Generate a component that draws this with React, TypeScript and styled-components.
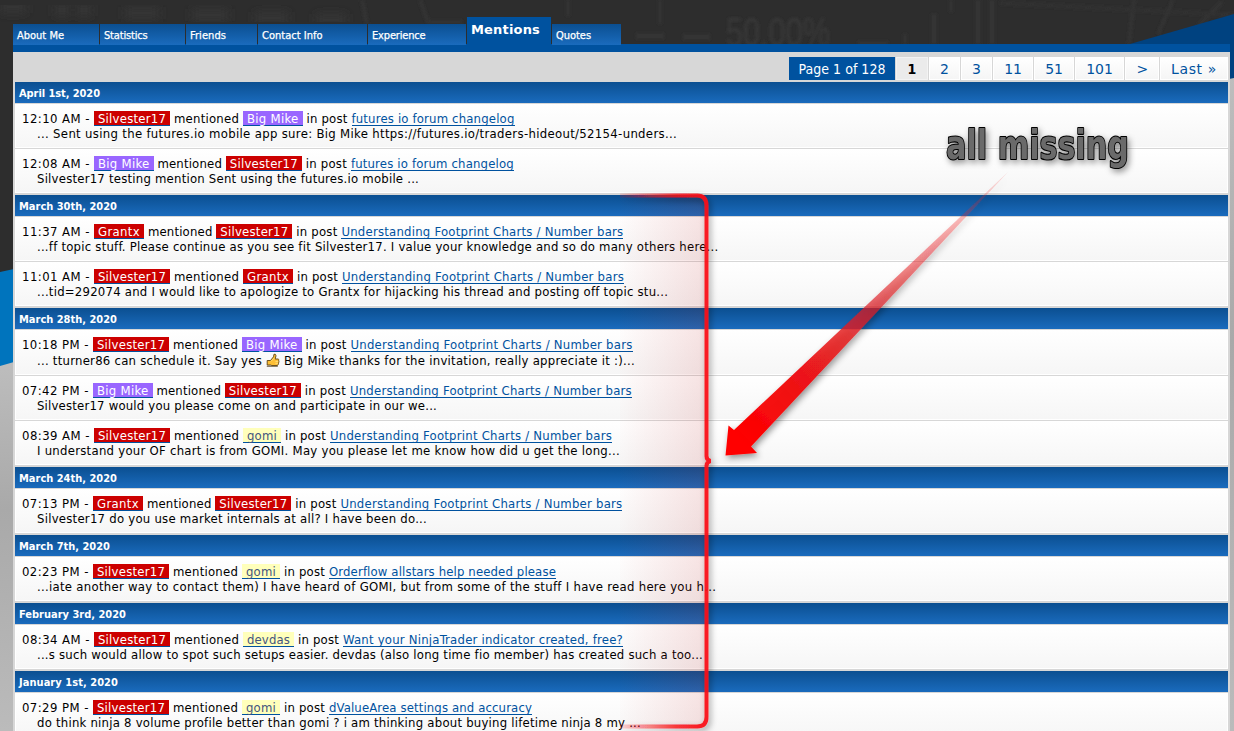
import React, { useLayoutEffect, useRef, useState } from 'react';
import styled, { createGlobalStyle, css } from 'styled-components';

const sans = "'DejaVu Sans Condensed', 'DejaVu Sans', Tahoma, Verdana, sans-serif";

const GlobalStyle = createGlobalStyle`
  html, body { margin: 0; padding: 0; height: 731px; overflow: hidden; }
  body { background: #2d2d2d; color: #000; font: 13px/15px ${sans}; font-stretch: condensed; }
  * { box-sizing: border-box; }
`;

const Page = styled.div`
  position: relative;
  width: 1234px;
  height: 731px;
  overflow: hidden;
`;

const Layer = styled.svg`
  position: absolute;
  top: 0;
  left: 0;
  pointer-events: none;
`;

const Content = styled.main`
  position: relative;
  width: 1217px;
  margin-left: 13px;
  padding-top: 17px;
`;

const Tabs = styled.nav`
  position: relative;
  display: flex;
  align-items: flex-end;
  gap: 1px;
  height: 28px;
  margin-bottom: -1px;
`;

const Tab = styled.a<{ $width: number; $active?: boolean }>`
  width: ${p => p.$width}px;
  height: 21px;
  padding: 4px 0 0 4px;
  color: #fff;
  font-size: 11px;
  line-height: 15px;
  -webkit-text-stroke: 0.25px #fff;
  background: linear-gradient(#0b4f91, #1a6bbd);
  ${p => p.$active && css`
    height: 28px;
    padding-top: 5px;
    font-family: 'DejaVu Sans', Verdana, sans-serif;
    font-stretch: normal;
    font-size: 13px;
    font-weight: bold;
    -webkit-text-stroke: 0;
    background: #00529f;
  `}
`;

const Panel = styled.div`
  background: #d7d7d7;
  border-top: 8px solid #00529f;
  padding: 0 2px;
  height: 690px;
`;

const Pager = styled.div`
  display: flex;
  justify-content: flex-end;
  gap: 1px;
  height: 30px;
  padding: 5px 0 2px;
`;

const PageCell = styled.a<{ $width: number; $kind?: 'label' | 'current' }>`
  width: ${p => p.$width}px;
  height: 23px;
  display: flex;
  align-items: center;
  justify-content: center;
  padding-top: 2px;
  font-size: 14px;
  color: #00529f;
  border: 1px solid #fff;
  background: linear-gradient(#fff, #f5f5f5);
  ${p => !p.$kind && css`
    font-family: 'DejaVu Sans', Verdana, sans-serif;
    font-stretch: normal;
  `}
  ${p => p.$kind === 'label' && css`
    color: #fff;
    border-color: #00529f;
    background: #00529f;
  `}
  ${p => p.$kind === 'current' && css`
    color: #000;
    font-weight: bold;
    border-color: #f3f3f3;
    background: #ebebeb;
  `}
`;

const Day = styled.section`
  display: flex;
  flex-direction: column;
  gap: 1px;
  margin-bottom: 2px;
`;

const DayTitle = styled.h3`
  margin: 0;
  height: 21px;
  padding-left: 4px;
  font-size: 11px;
  line-height: 23px;
  font-weight: bold;
  color: #fff;
  background: linear-gradient(#0b4f91, #1a6bbd);
`;

const Row = styled.article<{ $tall?: boolean }>`
  height: ${p => (p.$tall ? 45 : 44)}px;
  padding: 7px 0 0 6px;
  border: solid #fff;
  border-width: 0 1px 1px;
  background: linear-gradient(#fff, #f6f6f6);
`;

const Line = styled.div`
  display: flex;
  height: 15px;
  white-space: pre;
`;

const Snippet = styled(Line)<{ $tall?: boolean }>`
  padding-left: 15px;
  ${p => p.$tall && 'margin-top: 1px;'}
`;

const palette = {
  red: css`background: #cc0000; color: #fff;`,
  violet: css`background: #9966ff; color: #fff;`,
  yellow: css`background: #ffffbb; color: #44557e;`,
};

const Badge = styled.a<{ $tone: keyof typeof palette }>`
  height: 15px;
  line-height: 15px;
  border-bottom: 1px solid #00529f;
  ${p => palette[p.$tone]}
`;

const PostLink = styled.a`
  height: 15px;
  color: #00529f;
  border-bottom: 1px solid #00529f;
`;

const Measured = styled.span`
  display: inline-block;
  white-space: pre;
  vertical-align: top;
`;

/* Spreads a run of text evenly over the given width. */
function Run({ w, children }: { w: number; children: string }) {
  const ref = useRef<HTMLSpanElement>(null);
  const [spacing, setSpacing] = useState(0);
  useLayoutEffect(() => {
    const natural = ref.current!.getBoundingClientRect().width;
    setSpacing(s => s + (w - natural) / children.length);
  }, [w, children]);
  return <Measured ref={ref} style={{ letterSpacing: `${spacing}px` }}>{children}</Measured>;
}

const users = {
  'Silvester17': { tone: 'red', width: 76 },
  'Grantx': { tone: 'red', width: 50 },
  'Big Mike': { tone: 'violet', width: 59.5 },
  'gomi': { tone: 'yellow', width: 38 },
  'devdas': { tone: 'yellow', width: 51 },
} as const;
type User = keyof typeof users;

function UserBadge({ name }: { name: User }) {
  const u = users[name];
  return <Badge $tone={u.tone}><Run w={u.width}>{` ${name} `}</Run></Badge>;
}

type Mention = { time: string; by: User; who: User; post: string; postW: number; text: string; textW: number; thumb?: boolean };

const FOOTPRINT = 'Understanding Footprint Charts / Number bars';

const days: { date: string; w: number; items: Mention[] }[] = [
  { date: 'April 1st, 2020', w: 81, items: [
    { time: '12:10 AM', by: 'Silvester17', who: 'Big Mike', post: 'futures io forum changelog', postW: 163, text: '... Sent using the futures.io mobile app sure: Big Mike https://futures.io/traders-hideout/52154-unders...', textW: 640 },
    { time: '12:08 AM', by: 'Big Mike', who: 'Silvester17', post: 'futures io forum changelog', postW: 163, text: 'Silvester17 testing mention Sent using the futures.io mobile ...', textW: 382 },
  ] },
  { date: 'March 30th, 2020', w: 98, items: [
    { time: '11:37 AM', by: 'Grantx', who: 'Silvester17', post: FOOTPRINT, postW: 282, text: '...ff topic stuff. Please continue as you see fit Silvester17. I value your knowledge and so do many others here...', textW: 682 },
    { time: '11:01 AM', by: 'Silvester17', who: 'Grantx', post: FOOTPRINT, postW: 282, text: '...tid=292074 and I would like to apologize to Grantx for hijacking his thread and posting off topic stu...', textW: 631 },
  ] },
  { date: 'March 28th, 2020', w: 98, items: [
    { time: '10:18 PM', by: 'Silvester17', who: 'Big Mike', post: FOOTPRINT, postW: 282, text: '... tturner86 can schedule it. Say yes ', textW: 229, thumb: true },
    { time: '07:42 PM', by: 'Big Mike', who: 'Silvester17', post: FOOTPRINT, postW: 282, text: 'Silvester17 would you please come on and participate in our we...', textW: 400 },
    { time: '08:39 AM', by: 'Silvester17', who: 'gomi', post: FOOTPRINT, postW: 282, text: 'I understand your OF chart is from GOMI. May you please let me know how did u get the long...', textW: 583 },
  ] },
  { date: 'March 24th, 2020', w: 98, items: [
    { time: '07:13 PM', by: 'Grantx', who: 'Silvester17', post: FOOTPRINT, postW: 282, text: 'Silvester17 do you use market internals at all? I have been do...', textW: 390 },
  ] },
  { date: 'March 7th, 2020', w: 91, items: [
    { time: '02:23 PM', by: 'Silvester17', who: 'gomi', post: 'Orderflow allstars help needed please', postW: 227, text: '...iate another way to contact them) I have heard of GOMI, but from some of the stuff I have read here you h...', textW: 679 },
  ] },
  { date: 'February 3rd, 2020', w: 107, items: [
    { time: '08:34 AM', by: 'Silvester17', who: 'devdas', post: 'Want your NinjaTrader indicator created, free?', postW: 280, text: '...s such would allow to spot such setups easier. devdas (also long time fio member) has created such a too...', textW: 666 },
  ] },
  { date: 'January 1st, 2020', w: 99, items: [
    { time: '07:29 PM', by: 'Silvester17', who: 'gomi', post: 'dValueArea settings and accuracy', postW: 203, text: 'do think ninja 8 volume profile better than gomi ? i am thinking about buying lifetime ninja 8 my ...', textW: 604 },
  ] },
];

const tabs = [
  { label: 'About Me', width: 86, text: 47 },
  { label: 'Statistics', width: 85, text: 43.5 },
  { label: 'Friends', width: 71, text: 36 },
  { label: 'Contact Info', width: 109, text: 60.5 },
  { label: 'Experience', width: 98, text: 53.5 },
  { label: 'Mentions', width: 84, text: 69, active: true },
  { label: 'Quotes', width: 69, text: 35 },
];

const pages: { label: string; width: number; text: number; kind?: 'label' | 'current' }[] = [
  { label: 'Page 1 of 128', width: 106, text: 87, kind: 'label' },
  { label: '1', width: 32, text: 9, kind: 'current' },
  { label: '2', width: 31, text: 9 },
  { label: '3', width: 31, text: 9 },
  { label: '11', width: 40, text: 17.5 },
  { label: '51', width: 40, text: 17.5 },
  { label: '101', width: 49, text: 26.5 },
  { label: '>', width: 34, text: 11 },
  { label: 'Last »', width: 68, text: 46 },
];

const Thumb = () => (
  <svg width="14" height="15" viewBox="0 0 14 15">
    <path d="M1.2 7.5h3.3L7.5 3.8 8 1.2q2-.4 2 1.6L9.2 6h3q1 .4.5 1.6.5.7 0 1.6.3.9-.4 1.6 0 1.2-.9 1.7H5.8L4.5 12H1.2z" fill="#fdbf35" stroke="#5e4312" strokeWidth=".9" />
    <path d="M.8 13.2h11" stroke="#5b4a2b" strokeWidth="1" />
    <path d="M5 8.3 8.3 5M9.5 8.4h2.7M9.4 10.3h2.5" stroke="#ffe58a" strokeWidth=".8" />
  </svg>
);

const Backdrop = () => (
  <Layer width="1234" height="731" aria-hidden>
    <defs>
      <linearGradient id="gray" x1="0" y1="0" x2="0" y2="1">
        <stop offset="0" stopColor="#bdbdbd" /><stop offset=".4" stopColor="#a9a9a9" /><stop offset="1" stopColor="#bbb" />
      </linearGradient>
      <filter id="haze"><feGaussianBlur stdDeviation="1.4" /></filter>
      <filter id="fog"><feGaussianBlur stdDeviation="4" /></filter>
    </defs>
    <rect width="1234" height="731" fill="#2d2d2d" />
    <g filter="url(#fog)" fill="none" stroke="#343434" strokeWidth="12">
      <path d="M0 7h26M55 10h14M77 10h14M125 13h34M192 15h36M255 18h33M316 20h30" />
    </g>
    <g filter="url(#haze)" fill="none" stroke="#353535" strokeWidth="3">
      <path d="M362 0l5 24M420 0l8 22h34M568 0v16M660 0v24M858 43h30M905 34v10M951 0v12M1134 0l-5 44M1173 0l-15 34M1222 2l-24 24" />
      <path d="M934 14v30M978 0v44M992 0v44M636 36h28M683 37h27" strokeWidth="5" />
      <path d="M1000 3l234 12" stroke="#313131" />
      <text x="726" y="46" fill="#383838" stroke="none" fontFamily="Liberation Sans" fontSize="40" textLength="104" lengthAdjust="spacingAndGlyphs">50.00%</text>
    </g>
    <path d="M0 272 14 269V370H0z" fill="#0074bd" />
    <path d="M0 366 14 362V731H0z" fill="url(#gray)" />
    <path d="M1130 44 1234 14V80H1130z" fill="#004280" />
    <path d="M1229 79 1234 78V731H1229z" fill="url(#gray)" />
  </Layer>
);

const Annotation = () => (
  <Layer width="1234" height="731">
    <defs>
      <linearGradient id="wash" gradientUnits="userSpaceOnUse" x1="620" x2="707" y1="0" y2="0">
        <stop offset="0" stopColor="#c02020" stopOpacity=".01" /><stop offset="1" stopColor="#c02020" stopOpacity=".13" />
      </linearGradient>
      <linearGradient id="edge" gradientUnits="userSpaceOnUse" x1="620" x2="700" y1="0" y2="0">
        <stop offset="0" stopColor="#fa0f14" stopOpacity=".12" /><stop offset=".7" stopColor="#fa0f14" stopOpacity=".8" /><stop offset="1" stopColor="#fa0f14" stopOpacity=".93" />
      </linearGradient>
      <linearGradient id="shaft" gradientUnits="userSpaceOnUse" x1="740" y1="440" x2="1008" y2="172">
        <stop offset="0" stopColor="#f00" /><stop offset=".25" stopColor="#ec1215" stopOpacity=".97" /><stop offset=".5" stopColor="#df1a22" stopOpacity=".68" /><stop offset=".8" stopColor="#f02020" stopOpacity=".32" /><stop offset="1" stopColor="#f02020" stopOpacity=".15" />
      </linearGradient>
      <filter id="shade" filterUnits="userSpaceOnUse" x="600" y="100" width="634" height="631"><feDropShadow dx="2" dy="3" stdDeviation="3.2" floodColor="#000" floodOpacity=".42" /></filter>
    </defs>
    <path d="M620 195h77q9 0 9 9v513q0 9-9 9h-77z" fill="url(#wash)" />
    <g filter="url(#shade)">
      <path d="M620 195.5H697Q706.5 195.5 706.5 205.5V456Q706.5 460 710.5 461Q706.5 462 706.5 466V717Q706.5 726.5 697 726.5H620" fill="none" stroke="url(#edge)" strokeWidth="4" />
      <path d="M725.5 455.5 728.5 425.5 734 430 1008 172 751 446.5 757 453z" fill="url(#shaft)" />
      <text x="946" y="159" fill="#6b6b6b" stroke="#000" strokeWidth="2.2" strokeLinejoin="round" paintOrder="stroke" fontFamily="'DejaVu Sans', sans-serif" fontWeight="700" fontSize="41" fontStretch="normal" textLength="183" lengthAdjust="spacingAndGlyphs">all missing</text>
    </g>
  </Layer>
);

export default function App() {
  return (
    <Page>
      <GlobalStyle />
      <Backdrop />
      <Content>
        <Tabs>
          {tabs.map(t => (
            <Tab key={t.label} $width={t.width} $active={t.active}><Run w={t.text}>{t.label}</Run></Tab>
          ))}
        </Tabs>
        <Panel>
          <Pager>
            {pages.map(p => (
              <PageCell key={p.label} $width={p.width} $kind={p.kind}><Run w={p.text}>{p.label}</Run></PageCell>
            ))}
          </Pager>
          {days.map(d => (
            <Day key={d.date}>
              <DayTitle><Run w={d.w}>{d.date}</Run></DayTitle>
              {d.items.map(m => (
                <Row key={m.time} $tall={m.thumb}>
                  <Line>
                    <Run w={m.time.endsWith('AM') ? 72 : 71}>{`${m.time} - `}</Run>
                    <UserBadge name={m.by} />
                    <Run w={m.by === 'Silvester17' ? 73 : 72.4}>{' mentioned '}</Run>
                    <UserBadge name={m.who} />
                    <Run w={49}>{' in post '}</Run>
                    <PostLink><Run w={m.postW}>{m.post}</Run></PostLink>
                  </Line>
                  <Snippet $tall={m.thumb}>
                    <Run w={m.textW}>{m.text}</Run>
                    {m.thumb && <><Thumb /><Run w={355}>{' Big Mike thanks for the invitation, really appreciate it :)...'}</Run></>}
                  </Snippet>
                </Row>
              ))}
            </Day>
          ))}
        </Panel>
      </Content>
      <Annotation />
    </Page>
  );
}
